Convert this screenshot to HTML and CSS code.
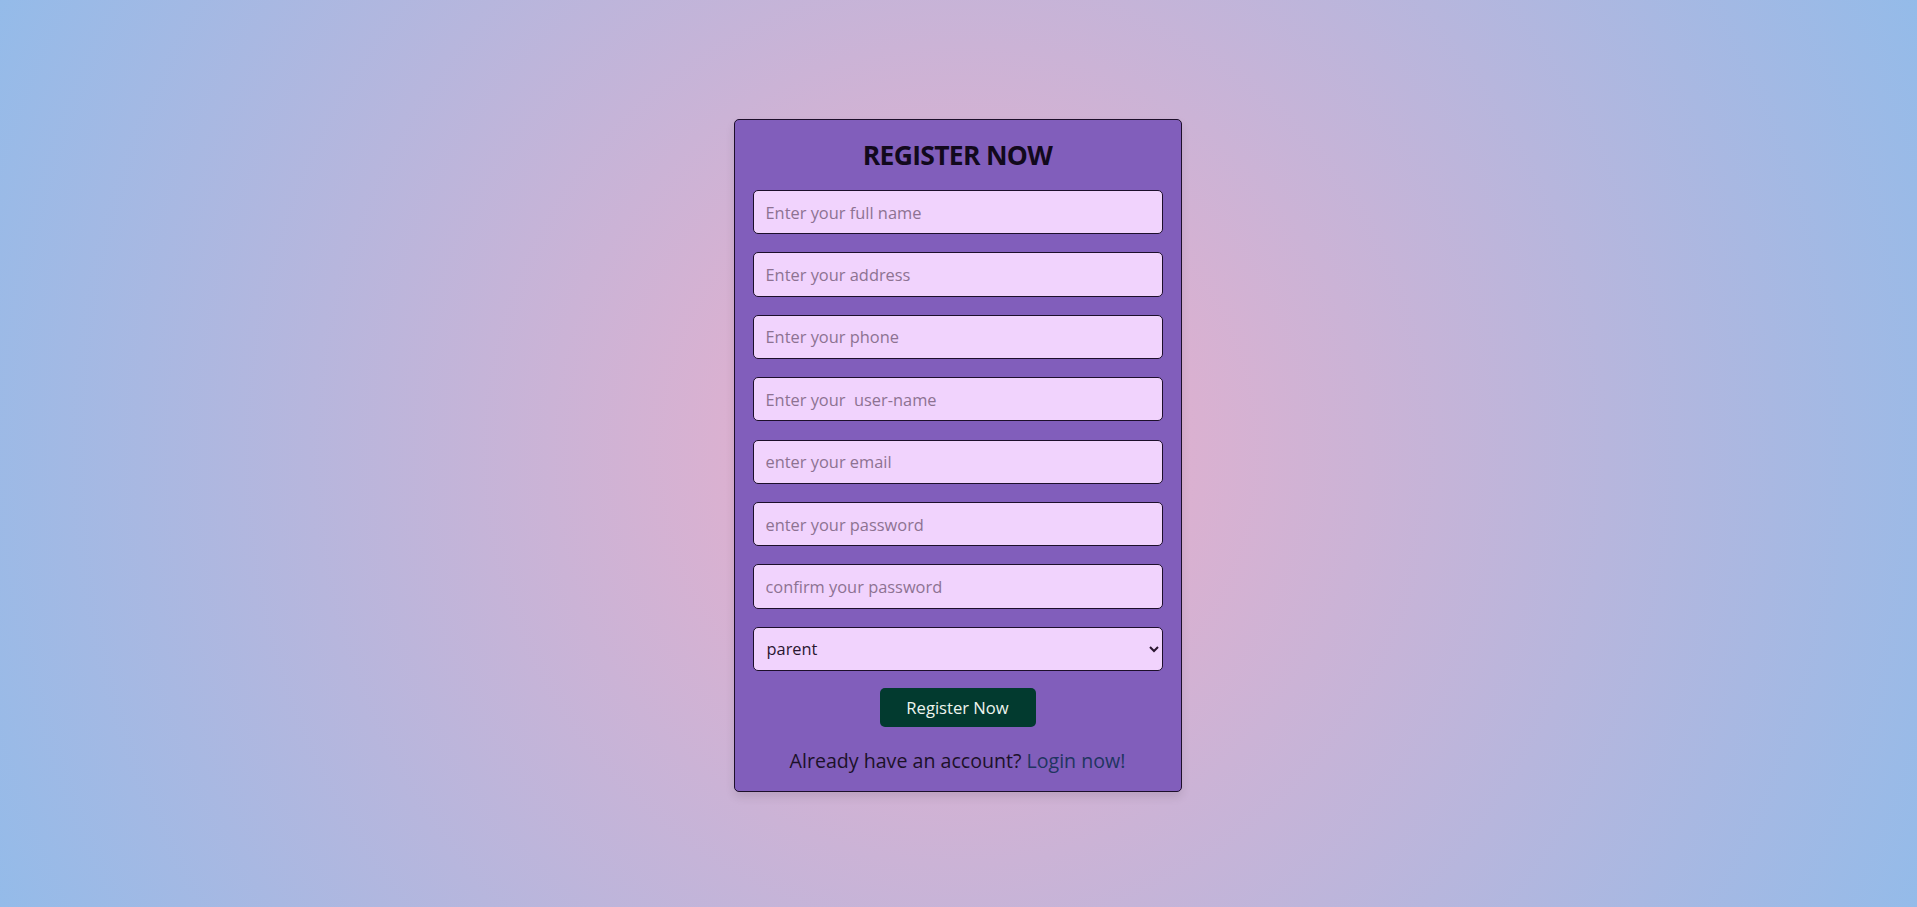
FILE: index.html
```html
<!DOCTYPE html>
<html lang="en">
<head>
<meta charset="utf-8">
<title>Register</title>
<link rel="stylesheet" href="styles.css">
</head>
<body>
<div class="form-container">
  <form class="form" action="#">
    <h3 class="title">REGISTER NOW</h3>
    <input class="field" type="text" placeholder="Enter your full name">
    <input class="field" type="text" placeholder="Enter your address">
    <input class="field" type="text" placeholder="Enter your phone">
    <input class="field" type="text" placeholder="Enter your  user-name">
    <input class="field" type="email" placeholder="enter your email">
    <input class="field" type="password" placeholder="enter your password">
    <input class="field" type="password" placeholder="confirm your password">
    <select class="field select">
      <option>parent</option>
      <option>student</option>
    </select>
    <button class="btn" type="button">Register Now</button>
    <p class="note">Already have an account? <a class="link" href="#">Login now!</a></p>
  </form>
</div>
</body>
</html>
```
FILE: styles.css
```css
* {
  box-sizing: border-box;
}
html, body {
  margin: 0;
  padding: 0;
}
body {
  min-height: 100vh;
  font-family: "Open Sans", "DejaVu Sans", sans-serif;
  background: radial-gradient(circle, rgba(238,174,202,1) 0%, rgba(148,187,233,1) 100%);
}
.form-container {
  min-height: 100vh;
  display: flex;
  align-items: center;
  justify-content: center;
  padding: 4px 2px 0 0;
}
.form {
  width: 448px;
  height: 673px;
  background: #815ebb;
  border: 1px solid #1d0f2b;
  border-radius: 5px;
  box-shadow: 0 5px 10px rgba(0,0,0,.1);
  padding: 18px 18px 0;
  display: flex;
  flex-direction: column;
  align-items: center;
  text-align: center;
}
.title {
  margin: 0 0 18px;
  font-size: 26.5px;
  line-height: 34px;
  letter-spacing: -0.7px;
  font-weight: 700;
  color: #12091c;
}
.field {
  width: 100%;
  height: 44.3px;
  margin: 0 0 18.1px;
  padding: 0 12px;
  font-family: inherit;
  font-size: 16.4px;
  color: #2a1630;
  background: #f1d3fd;
  border: 1px solid #1d0f2b;
  border-radius: 5px;
  outline: none;
}
.field::placeholder {
  color: #8d7292;
}
.select {
  margin-bottom: 17.3px;
  padding-left: 9px;
}
.btn {
  width: 156px;
  height: 39px;
  background: #023a2f;
  color: #eef5ee;
  border: none;
  border-radius: 5px;
  font-family: inherit;
  font-size: 16.6px;
  cursor: pointer;
}
.note {
  margin: 22px 0 0;
  font-size: 19.6px;
  line-height: 24px;
  color: #1c1129;
}
.link {
  color: #1f3560;
  text-decoration: none;
}
```
